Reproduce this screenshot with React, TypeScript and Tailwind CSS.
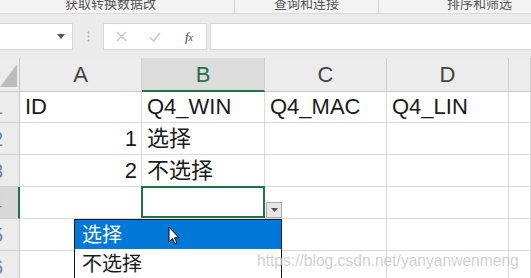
import React from "react";

const cellFont = { fontFamily: '"Liberation Sans", "Noto Sans CJK SC", sans-serif' };

function Cell({ children, right, className = "" }: { children?: React.ReactNode; right?: boolean; className?: string }) {
  return (
    <div
      className={`h-full border-r border-b border-[#dadada] bg-white flex items-center overflow-hidden whitespace-nowrap text-[22px] leading-none text-[#1a1a1a] ${right ? "justify-end pr-[4px]" : "pl-[5px]"} ${className}`}
    >
      {children}
    </div>
  );
}

function RowHead({ n, active }: { n: number; active?: boolean }) {
  return (
    <div
      className={`h-full flex items-center justify-end pr-[16px] overflow-hidden border-b border-[#d0d0d0] text-[20px] text-[#6f88a8] ${active ? "bg-[#d8d8d8] border-r-2 border-r-[#217346]" : "bg-[#ececec] border-r border-r-[#c8c8c8]"}`}
    >
      {n}
    </div>
  );
}

function ColHead({ l, active }: { l: string; active?: boolean }) {
  return (
    <div
      className={`h-full flex items-center justify-center text-[22px] border-r border-[#cfcfcf] ${active ? "bg-[#dcdcdc] text-[#217346] border-b-2 border-b-[#217346]" : "bg-[#ececec] text-[#444] border-b border-b-[#c8c8c8]"}`}
    >
      {l}
    </div>
  );
}

export default function App() {
  const rowH = "grid-rows-[34px_31px_32px_32px_32px_32px_32px]";
  return (
    <div className="w-[531px] h-[278px] overflow-hidden bg-[#ebebeb] relative" style={cellFont}>
      {/* ribbon group labels */}
      <div className="h-[14px] bg-[#f3f3f3] border-b border-[#dcdcdc] flex items-end overflow-hidden text-[13px] leading-[14px] text-[#555]">
        <div className="w-[235px] flex justify-start pl-[65px] pb-[2px] border-r border-[#d6d6d6] h-full items-end">获取转换数据改</div>
        <div className="w-[144px] flex justify-center pb-[2px] border-r border-[#d6d6d6] h-full items-end">查询和连接</div>
        <div className="flex-1 flex justify-start pl-[68px] pb-[2px] h-full items-end">排序和筛选</div>
      </div>
      {/* formula bar */}
      <div className="h-[44px] flex items-start pt-[9px] gap-0">
        <div className="w-[73px] h-[27px] bg-white border border-[#d8d8d8] border-l-0 flex items-center justify-end pr-[7px]">
          <svg width="8" height="5" viewBox="0 0 8 5"><path d="M0 0h8L4 5z" fill="#555" /></svg>
        </div>
        <div className="w-[30px] h-[27px] flex items-center justify-center">
          <svg width="3" height="11" viewBox="0 0 3 11">
            <circle cx="1.5" cy="1.5" r="1" fill="#a8a8a8" />
            <circle cx="1.5" cy="5.5" r="1" fill="#a8a8a8" />
            <circle cx="1.5" cy="9.5" r="1" fill="#a8a8a8" />
          </svg>
        </div>
        <div className="w-[104px] h-[27px] bg-white border border-[#d8d8d8] flex items-center">
          <div className="w-[34px] flex justify-center">
            <svg width="11" height="11" viewBox="0 0 11 11"><path d="M1 1l9 9M10 1l-9 9" stroke="#c4c4c4" strokeWidth="1.3" /></svg>
          </div>
          <div className="w-[34px] flex justify-center">
            <svg width="12" height="10" viewBox="0 0 12 10"><path d="M1 5.5l3.5 3.5L11 1" stroke="#c4c4c4" strokeWidth="1.4" fill="none" /></svg>
          </div>
          <div className="w-[34px] flex justify-center text-[13px] italic text-[#444]" style={{ fontFamily: '"Liberation Serif", serif' }}>
            <span>f</span><span className="text-[10px] mt-[3px]">x</span>
          </div>
        </div>
        <div className="w-[3px]" />
        <div className="flex-1 h-[27px] bg-white border border-[#d8d8d8] border-r-0" />
      </div>
      {/* sheet */}
      <div className={`grid grid-cols-[20px_122px_123px_122px_122px_1fr] ${rowH}`}>
        <div className="bg-[#ececec] border-r border-b border-[#c8c8c8] flex items-end justify-start pb-[4px]">
          <svg width="17" height="23" viewBox="0 0 17 23"><path d="M17 0V23H0z" fill="#bdbdbd" /></svg>
        </div>
        <ColHead l="A" />
        <ColHead l="B" active />
        <ColHead l="C" />
        <ColHead l="D" />
        <ColHead l="" />

        <RowHead n={1} />
        <Cell>ID</Cell>
        <Cell>Q4_WIN</Cell>
        <Cell>Q4_MAC</Cell>
        <Cell>Q4_LIN</Cell>
        <Cell />

        <RowHead n={2} />
        <Cell right>1</Cell>
        <Cell>选择</Cell>
        <Cell />
        <Cell />
        <Cell />

        <RowHead n={3} />
        <Cell right>2</Cell>
        <Cell>不选择</Cell>
        <Cell />
        <Cell />
        <Cell />

        <RowHead n={4} active />
        <Cell />
        <div className="h-full bg-white border-2 border-[#217346] -ml-px -mt-px" />
        <Cell />
        <Cell />
        <Cell />

        <RowHead n={5} />
        <Cell />
        <Cell />
        <Cell />
        <Cell />
        <Cell />

        <RowHead n={6} />
        <Cell />
        <Cell />
        <Cell />
        <Cell />
        <Cell />
      </div>

      {/* dropdown arrow button */}
      <div className="absolute left-[266px] top-[202px] w-[16px] h-[16px] bg-[#e6e6e6] border border-[#a9a9a9] flex items-center justify-center">
        <svg width="7" height="4" viewBox="0 0 7 4"><path d="M0 0h7L3.5 4z" fill="#555" /></svg>
      </div>

      {/* dropdown list */}
      <div className="absolute left-[74px] top-[219px] w-[208px] h-[70px] bg-white border border-[#1a1a1a] text-[20px] leading-none" style={cellFont}>
        <div className="h-[29px] bg-[#0078d7] text-white flex items-center pl-[7px]">选择</div>
        <div className="h-[29px] text-[#1a1a1a] flex items-center pl-[7px]">不选择</div>
      </div>

      {/* mouse cursor */}
      <svg className="absolute left-[168px] top-[226px]" width="12" height="19" viewBox="0 0 12 19">
        <path d="M1 1v15l3.5-3.5 2.5 5.5 2-1-2.5-5.2H11z" fill="#fff" stroke="#000" strokeWidth="1" strokeLinejoin="round" />
      </svg>

      {/* watermark */}
      <div className="absolute left-[257px] top-[251px] text-[15.6px] leading-[20px] text-[#c4c4c4]/80 whitespace-nowrap pointer-events-none" style={{ fontFamily: '"Liberation Sans", sans-serif' }}>
        https://blog.csdn.net/yanyanwenmeng
      </div>
    </div>
  );
}
